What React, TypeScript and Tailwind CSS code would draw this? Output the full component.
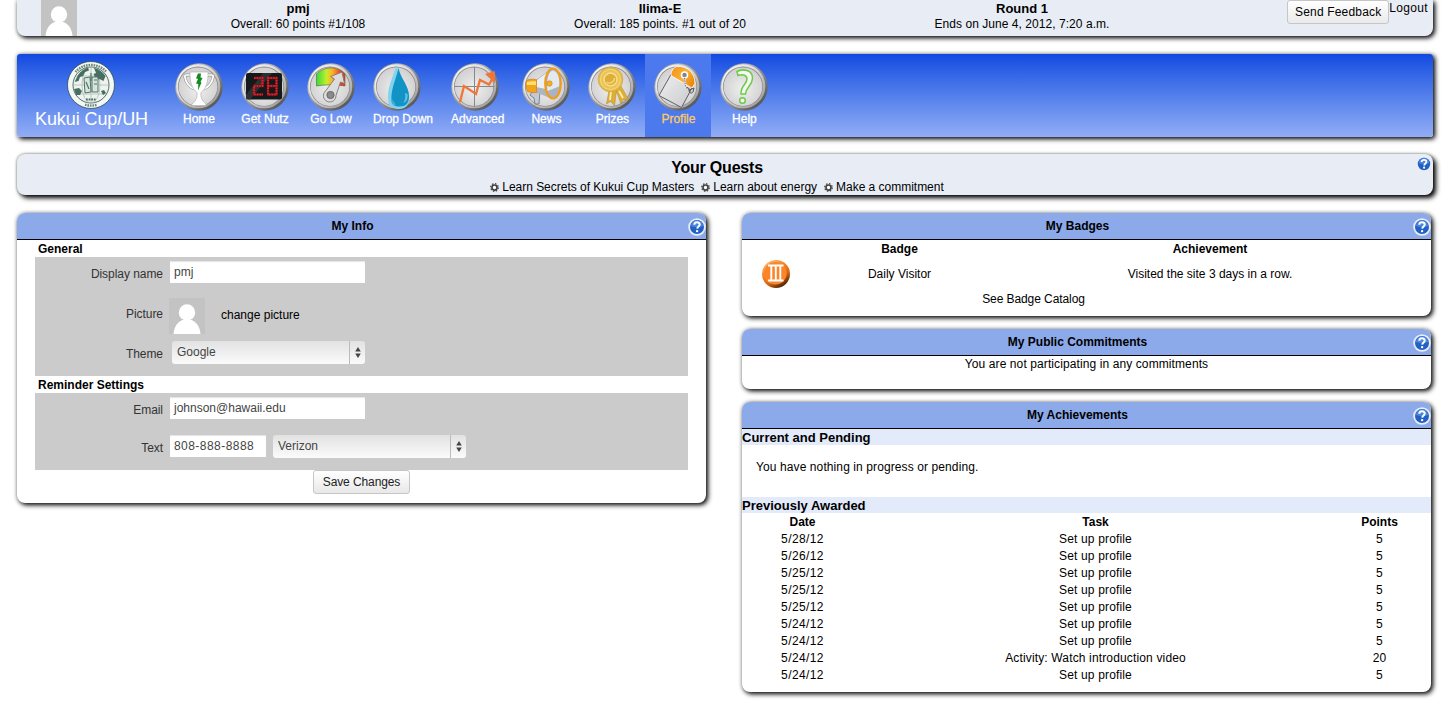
import React from "react";

const PANEL_SHADOW = "shadow-[2px_2px_5px_#000,0_0_4px_rgba(0,0,0,0.25)]";

function HelpIcon({ size }: { size: number }) {
  return (
    <svg width={size} height={size} viewBox="0 0 18 18" className="block shrink-0">
      <circle cx="9" cy="9" r="8.800" fill="#e9edf4" />
      <circle cx="9" cy="9" r="7" fill="#2360c4" />
      <path d="M3 8a6 6 0 0 1 12 0c-3 1.500-9 1.500-12 0z" fill="#4a85dc" />
      <path d="M6.300 6.700c.2-3.200 5.500-3.100 5.400-.2 0 2-2.300 1.900-2.500 4.200" fill="none" stroke="#fff" strokeWidth="2" />
      <circle cx="9.100" cy="13.100" r="1.200" fill="#fff" />
    </svg>
  );
}

function Avatar() {
  return (
    <svg width="36" height="36" viewBox="0 0 36 36" className="block shrink-0">
      <rect width="36" height="36" fill="#c3c3c3" />
      <circle cx="18" cy="14.500" r="8.200" fill="#fff" />
      <path d="M4.500 36c.5-8 5-12.500 9-14h9c4 1.500 8.500 6 9 14z" fill="#fff" />
    </svg>
  );
}

function Disc({ children }: { children: React.ReactNode }) {
  return (
    <svg width="48" height="48" viewBox="0 0 48 48" className="block">
      <defs>
        <linearGradient id="rim" x1="0" y1="0" x2="1" y2="1">
          <stop offset="0" stopColor="#8a8a8a" />
          <stop offset="0.3" stopColor="#b5b5b5" />
          <stop offset="0.55" stopColor="#8d8d8d" />
          <stop offset="1" stopColor="#3f3f3f" />
        </linearGradient>
        <linearGradient id="ring" x1="0" y1="0" x2="1" y2="1">
          <stop offset="0" stopColor="#ffffff" />
          <stop offset="0.5" stopColor="#d5d5d5" />
          <stop offset="1" stopColor="#8e8e8e" />
        </linearGradient>
        <radialGradient id="face" cx="0.5" cy="0.55" r="0.6">
          <stop offset="0" stopColor="#f0f0f0" />
          <stop offset="1" stopColor="#cfcdcf" />
        </radialGradient>
      </defs>
      <circle cx="24" cy="24" r="23.700" fill="url(#rim)" />
      <circle cx="23.300" cy="23.300" r="22" fill="url(#ring)" />
      <circle cx="23" cy="23.500" r="20" fill="#8b8b8b" />
      <circle cx="23" cy="23.700" r="19.300" fill="url(#face)" />
      {children}
    </svg>
  );
}

const trophy = (
  <g>
    <path d="M16 12h-4.500c-1.500 0-2 1-1.500 2.500 1 5 4 9 9 11.500M32 12h4.500c1.500 0 2 1 1.500 2.500-1 5-4 9-9 11.500" fill="none" stroke="#999" strokeWidth="3" />
    <path d="M16 12h-4.500c-1.500 0-2 1-1.500 2.500 1 5 4 9 9 11.500M32 12h4.500c1.500 0 2 1 1.500 2.500-1 5-4 9-9 11.500" fill="none" stroke="#fff" strokeWidth="1.700" />
    <path d="M15 9h18c.3 10-2 17-7 20.500-.5 4 .5 8 5 11.500v1.500H17V41c4.500-3.500 5.500-7.500 5-11.500C17 26 14.700 19 15 9z" fill="#fff" stroke="#aaa" strokeWidth=".6" />
    <path d="M23 10.500h3l-.5 4 2 .5-2 4 1 .5-3.500 8 .3-6.500-2.300-.5 2-4.500-2-.8z" fill="#168a20" />
  </g>
);

const digits = (
  <g>
    <rect x="5" y="10" width="36" height="26.500" rx="2" fill="#14191b" />
    <path d="M5 32L22 10h9L9 36.500H5z" fill="#3a4348" opacity=".6" />
    <path d="M13 15h8.500v8H13v8.500h9M27 15h8.500v16.500H27zM27 23h8.500" fill="none" stroke="#8a1419" strokeWidth="2.400" />
    <path d="M13 15h8.500v8H13v8.500h9M27 15h8.500v16.500H27zM27 23h8.500" fill="none" stroke="#f0262e" strokeWidth="1.700" strokeDasharray="1.400 1.200" />
  </g>
);

const gauge = (
  <g>
    <defs>
      <linearGradient id="heat">
        <stop offset="0" stopColor="#35dc3c" />
        <stop offset="0.35" stopColor="#c3ee2c" />
        <stop offset="0.55" stopColor="#ffb324" />
        <stop offset="0.85" stopColor="#f63a1b" />
      </linearGradient>
    </defs>
    <path d="M9.500 11c8-8 21-8 28.500 0v12c-8-1.500-21-1.500-28.500 0z" fill="url(#heat)" stroke="#4d6a30" strokeWidth=".6" />
    <path d="M18.500 28L27.500 16l-3.800-2.500L35 9l2.500 11.500-4-1.500-4.500 13.500a6.300 6.300 0 1 1-10.500-4.500z" fill="#dcdcdc" stroke="#777" strokeWidth=".9" />
    <circle cx="23.500" cy="32" r="3.600" fill="#8b8b8b" stroke="#666" />
  </g>
);

const drop = (
  <g>
    <path d="M23.500 1.500c-2 10-11 24-8 38 1 5 6 6.500 11 6.500 7 0 10-5 10-12C36.500 23 26 14 23.500 1.500z" fill="#82d4ee" />
    <path d="M25.500 5c-2 10-8 21-7 33 .3 4 3 5.500 8 5.500 6 0 9.500-3 9.500-10C36 23 27.500 15 25.500 5z" fill="#1193c6" />
    <path d="M32 30c1 4 0 8-2 10 3.500-1 5-4 4.500-9z" fill="#9ee0f2" opacity=".6" />
    <path d="M19.500 36l-.5 6 4 .5z" fill="#70cbe8" opacity=".5" />
  </g>
);

const chart = (
  <g>
    <path d="M23.500 4v40M3.500 23.500h40" stroke="#888" strokeWidth="1" />
    <path d="M9 39l4-16 12 8 4-14 9 4.500 3.500-6" fill="none" stroke="#ef7637" strokeWidth="2.300" />
    <path d="M34 11l10-3v12z" fill="#ef7637" />
  </g>
);

const megaphone = (
  <g>
    <path d="M11 28l7 0-1 13-4 0-1-6-4-3z" fill="#c3cad4" stroke="#657080" strokeWidth=".8" />
    <path d="M14 17.500L29 6v29l-15-6z" fill="#eceff3" stroke="#8b929b" strokeWidth=".5" />
    <path d="M14 24l15 3v8l-15-6z" fill="#aeb5bf" />
    <path d="M4.500 17.500c3-1.500 6-1.500 10-1v13c-4 .5-6 0-9-1-1.500-3-2-8-1-11z" fill="#f6a317" stroke="#cb7a10" strokeWidth=".6" />
    <path d="M5 19c3-1 6-1 9-.5V22H4.500z" fill="#ffe070" />
    <ellipse cx="31" cy="20.500" rx="7.800" ry="15" fill="#a9b4c3" stroke="#f19c1a" strokeWidth="2.200" />
    <path d="M31 7.500c5 1.500 7 8 6 16L25.500 28C24 17 26.500 8 31 7.500z" fill="#e3e9f0" />
    <circle cx="27.500" cy="20.500" r="2.700" fill="#f5ae28" stroke="#d17e12" strokeWidth=".6" />
  </g>
);

const ribbon = (
  <g>
    <path d="M21 27l-2.500 14 4-2.500 4 4 2-14zM28 27l5 14 2-4.500h5.500L33 23z" fill="#dcae3a" stroke="#b98823" strokeWidth=".5" />
    <path d="M23 28l-1 9M31 28l4 7" stroke="#fff0a6" strokeWidth="1.800" />
    <circle cx="22.500" cy="16.500" r="12.300" fill="#e6bb4c" stroke="#d3a640" strokeWidth=".8" />
    <circle cx="22.500" cy="16.500" r="10" fill="#e9c355" stroke="#f3d578" strokeWidth="1.200" />
    <circle cx="22.500" cy="16.500" r="6.500" fill="#dfae3a" stroke="#f7e08d" strokeWidth="1.400" />
    <path d="M18.500 19a5 5 0 0 0 8-4" stroke="#f4d677" strokeWidth="1.500" fill="none" />
  </g>
);

const tag = (
  <g>
    <defs>
      <linearGradient id="flap" x1="0" y1="0" x2="1" y2="0.6">
        <stop offset="0" stopColor="#f0930f" />
        <stop offset="0.6" stopColor="#fbb03a" />
        <stop offset="1" stopColor="#ee8a0a" />
      </linearGradient>
      <linearGradient id="paper" x1="0" y1="0" x2="1" y2="1">
        <stop offset="0" stopColor="#f0f0f1" />
        <stop offset="1" stopColor="#c9cacd" />
      </linearGradient>
    </defs>
    <path d="M17.500 10.500L5 32.500l22.500 12L38 25z" fill="url(#paper)" stroke="#5f5f63" strokeWidth="1" />
    <path d="M17 12.500c0-4 2-8 6-9 10-1 18 6 18 17l-3 4.500z" fill="url(#flap)" stroke="#fff" strokeWidth=".8" />
    <circle cx="30.500" cy="12" r="3" fill="#7c8794" stroke="#fff" strokeWidth="1.500" />
    <path d="M30.500 15l1 9c2 2 4 0 5 3" fill="none" stroke="#eee" strokeWidth="2" />
    <path d="M30.500 15l1 9c2 2 4 0 5 3" fill="none" stroke="#777" strokeWidth="1.200" strokeDasharray="1.400 1" />
    <path d="M35 27l5-2-1 4c-1.500 2-4 1-4-2zM33 24l3 4" fill="none" stroke="#555" strokeWidth="1" />
  </g>
);

const question = (
  <g fill="#f4f7f2" stroke="#69cc42" strokeWidth="1.500">
    <path d="M17 8.500C22 5.500 33 6.500 32.500 15.500 32 23 26 24 25.500 31h-4.500c-.5-9 6-9.500 6-15 0-4-4-5-9-3.500z" />
    <circle cx="22.500" cy="37.500" r="2.800" />
  </g>
);

const navItems = [
  { label: "Home", art: trophy },
  { label: "Get Nutz", art: digits },
  { label: "Go Low", art: gauge },
  { label: "Drop Down", art: drop },
  { label: "Advanced", art: chart },
  { label: "News", art: megaphone },
  { label: "Prizes", art: ribbon },
  { label: "Profile", art: tag, active: true },
  { label: "Help", art: question },
];

function Seal() {
  return (
    <svg width="48" height="48" viewBox="0 0 48 48" className="block">
      <circle cx="24" cy="24" r="23.500" fill="#f4f7f5" stroke="#2d5649" strokeWidth=".8" />
      <path d="M8.500 11A20.500 20.500 0 0 1 39.500 11" fill="none" stroke="#6d887d" strokeWidth="2.400" strokeDasharray="1.600 .9" />
      <path d="M18 43.700a20.500 20.500 0 0 0 12 0" fill="none" stroke="#6d887d" strokeWidth="2.400" strokeDasharray="1.600 .9" />
      <circle cx="24" cy="24" r="18" fill="#eef3f0" stroke="#3c6355" strokeWidth=".9" />
      <path d="M24 6v36M6 24h36M9 15h30M9 33h30" stroke="#a3b8af" strokeWidth=".7" />
      <ellipse cx="24" cy="24" rx="9" ry="18" fill="none" stroke="#a3b8af" strokeWidth=".7" />
      <path d="M11 14c3-4 6-6 10-7.500l1 3-4 1.500-2 4-3 1-1.500 4-4 1zM27 7c5 1 9 4 11.500 8l-2 5-4-2-3 1-3-6 2.500-1zM7 28l5-1 3 3-2 4-4 0zM34 30l3-1 2 3-3 2z" fill="#476f61" />
      <path d="M17 17l6-1 1 15-6 1zM25 16l6 0v15h-6z" fill="#d9e4de" stroke="#4e7566" strokeWidth="1" />
      <path d="M24 12v8M19 21l3 7M27 19h3M27 23h3" stroke="#4e7566" strokeWidth="1.200" />
      <path d="M19 38.500h10" stroke="#476f61" strokeWidth="2" strokeDasharray="1.800 .8" />
    </svg>
  );
}

function TopBar() {
  const cols = [
    ["pmj", "Overall: 60 points #1/108"],
    ["Ilima-E", "Overall: 185 points. #1 out of 20"],
    ["Round 1", "Ends on June 4, 2012, 7:20 a.m."],
  ];
  return (
    <header className={`flex h-9 rounded-b-lg bg-[#e8edf5] pl-6 pr-[5px] ${PANEL_SHADOW}`}>
      <Avatar />
      <div className="ml-10 grid w-[1086px] shrink-0 grid-cols-3 text-center">
        {cols.map(([title, line]) => (
          <div key={title} className="pt-px">
            <div className="text-[13px] font-bold leading-[15px]">{title}</div>
            <div className="leading-[17px] tracking-[0.05px]">{line}</div>
          </div>
        ))}
      </div>
      <div className="flex flex-1 items-start justify-end">
        <button className="h-6 w-[102px] shrink-0 whitespace-nowrap rounded-[3px] border border-[#c6c6c6] bg-linear-to-b from-white to-[#eaeaea] text-[12px] leading-[22px] tracking-[0.18px]">
          Send Feedback
        </button>
        <a className="leading-4 tracking-[0.35px]">Logout</a>
      </div>
    </header>
  );
}

function NavBar() {
  return (
    <nav className={`mt-[18px] flex h-[83px] rounded-[3px] bg-linear-to-b from-[#1249e0] to-[#92adf5] text-white ${PANEL_SHADOW}`}>
      <div className="flex w-[149px] flex-col items-center pt-[7px]">
        <div className="pr-[2px]">
          <Seal />
        </div>
        <div className="whitespace-nowrap text-[18px] leading-5 tracking-[-0.08px]">Kukui Cup/UH</div>
      </div>
      {navItems.map((item) => (
        <a
          key={item.label}
          className={item.active ? "min-w-[66px] bg-[#4c79ee] px-[9px] pt-[9px] text-[#fbcb62]" : "min-w-[66px] px-[9px] pt-[9px]"}
        >
          <Disc>{item.art}</Disc>
          <div className="whitespace-nowrap text-center leading-4 [-webkit-text-stroke:0.3px]">{item.label}</div>
        </a>
      ))}
    </nav>
  );
}

function Gear() {
  return (
    <svg width="9" height="9" viewBox="0 0 10 10" className="mr-[3px] shrink-0">
      <circle cx="5" cy="5" r="4.200" fill="none" stroke="#444" strokeWidth="1.400" strokeDasharray="1.650 1.650" />
      <circle cx="5" cy="5" r="2.800" fill="#fff" stroke="#444" strokeWidth="1.900" />
    </svg>
  );
}

function Quests() {
  return (
    <section className="mt-[17px] flex h-[41px] rounded-lg bg-[#e8edf5] pr-px shadow-[3px_3px_5px_#000,0_0_3px_rgba(0,0,0,0.5)]">
      <div className="flex-1 pl-px text-center">
        <h2 className="pt-1 text-[16px] font-bold leading-5 tracking-[-0.2px]">Your Quests</h2>
        <div className="flex justify-center gap-[7px] leading-[19px] tracking-[-0.02px]">
          {["Learn Secrets of Kukui Cup Masters", "Learn about energy", "Make a commitment"].map((q) => (
            <span key={q} className="flex items-center">
              <Gear />
              {q}
            </span>
          ))}
        </div>
      </div>
      <div className="pt-[2px]">
        <HelpIcon size={16} />
      </div>
    </section>
  );
}

function Panel({ title, className, children }: { title: string; className: string; children: React.ReactNode }) {
  return (
    <section className={`rounded-lg bg-white ${PANEL_SHADOW} ${className}`}>
      <div className="flex h-[27px] items-center rounded-t-lg border-b border-black bg-[#8ca9ea]">
        <h3 className="flex-1 text-center font-bold">{title}</h3>
        <div className="pt-[2px]">
          <HelpIcon size={18} />
        </div>
      </div>
      {children}
    </section>
  );
}

function Label({ children }: { children: React.ReactNode }) {
  return <label className="w-32 shrink-0 pt-[5px] text-right tracking-[-0.05px] text-[#333]">{children}</label>;
}

function Select({ value }: { value: string }) {
  return (
    <div className="flex h-[23px] w-[193px] rounded-[3px] bg-linear-to-b from-[#e2e2e2] to-[#fbfbfb] text-[#444]">
      <span className="flex-1 pl-[5px] leading-[22px]">{value}</span>
      <span className="flex w-4 items-center justify-center border-l border-[#bbb]">
        <svg width="6" height="11" viewBox="0 0 6 11">
          <path d="M3 0l2.800 4.500H.2zM3 11L.2 6.500h5.600z" fill="#444" />
        </svg>
      </span>
    </div>
  );
}

function TextBox({ value, className }: { value: string; className: string }) {
  return <div className={`ml-[7px] h-[22px] bg-white pl-1 leading-[22px] text-[#444] shadow-[inset_0_1px_1px_#e4e4e4] ${className}`}>{value}</div>;
}

function MyInfo() {
  return (
    <Panel title="My Info" className="h-[290px] w-[689px]">
      <div className="pl-[18px]">
        <h4 className="h-[17px] pl-[3px] font-bold leading-[18px]">General</h4>
        <div className="flex h-[119px] w-[653px] flex-col bg-[#cbcbcb] pt-1">
          <div className="flex h-[22px]">
            <Label>Display name</Label>
            <TextBox value="pmj" className="w-[195px]" />
          </div>
          <div className="mt-[15px] flex h-9">
            <div className="flex pt-[3px]">
              <Label>Picture</Label>
            </div>
            <div className="ml-1.5">
              <Avatar />
            </div>
            <a className="ml-4 pt-[9px]">change picture</a>
          </div>
          <div className="mt-[7px] flex h-[23px]">
            <Label>Theme</Label>
            <div className="ml-[9px]">
              <Select value="Google" />
            </div>
          </div>
        </div>
        <h4 className="h-[17px] pl-[3px] font-bold leading-[18px]">Reminder Settings</h4>
        <div className="flex h-[77px] w-[653px] flex-col bg-[#cbcbcb] pt-1">
          <div className="flex h-[22px]">
            <Label>Email</Label>
            <TextBox value="johnson@hawaii.edu" className="w-[195px]" />
          </div>
          <div className="mt-4 flex h-[23px]">
            <Label>Text</Label>
            <TextBox value="808-888-8888" className="w-[96px] tracking-[0.45px]" />
            <div className="ml-[7px]">
              <Select value="Verizon" />
            </div>
          </div>
        </div>
      </div>
      <button className="mx-auto block h-6 w-[97px] rounded-[3px] border border-[#c6c6c6] bg-linear-to-b from-white to-[#e8e8e8] leading-[22px] tracking-[-0.1px] text-[#222]">
        Save Changes
      </button>
    </Panel>
  );
}

function MyBadges() {
  return (
    <Panel title="My Badges" className="h-[103px]">
      <div className="grid grid-cols-[68px_179px_1fr] text-center leading-[18px]">
        <span />
        <span className="font-bold">Badge</span>
        <span className="font-bold">Achievement</span>
      </div>
      <div className="grid h-8 grid-cols-[68px_179px_1fr] items-center text-center">
        <svg width="28" height="28" viewBox="0 0 28 28" className="mx-auto block">
          <defs>
            <linearGradient id="orb" x1="0.2" y1="0" x2="0.8" y2="1">
              <stop offset="0" stopColor="#ffc18a" />
              <stop offset="0.3" stopColor="#f98a2c" />
              <stop offset="0.65" stopColor="#d9660f" />
              <stop offset="1" stopColor="#2a1402" />
            </linearGradient>
          </defs>
          <circle cx="14" cy="14" r="14" fill="url(#orb)" />
          <circle cx="13.300" cy="13.300" r="11.300" fill="#fb862a" />
          <path d="M6 5.500h15.500M6 20.500h15.500M9.300 6v14M13.800 6v14M18.300 6v14" stroke="#fff" strokeWidth="1.900" fill="none" />
        </svg>
        <span>Daily Visitor</span>
        <span>Visited the site 3 days in a row.</span>
      </div>
      <div className="pr-[106px] text-center leading-[18px] tracking-[-0.08px]">See Badge Catalog</div>
    </Panel>
  );
}

const awards: [string, string, number][] = [
  ["5/28/12", "Set up profile", 5],
  ["5/26/12", "Set up profile", 5],
  ["5/25/12", "Set up profile", 5],
  ["5/25/12", "Set up profile", 5],
  ["5/25/12", "Set up profile", 5],
  ["5/24/12", "Set up profile", 5],
  ["5/24/12", "Set up profile", 5],
  ["5/24/12", "Activity: Watch introduction video", 20],
  ["5/24/12", "Set up profile", 5],
];

function MyAchievements() {
  return (
    <Panel title="My Achievements" className="h-[290px]">
      <h4 className="h-4 bg-[#e3eafa] text-[13px] font-bold leading-[17px]">Current and Pending</h4>
      <p className="h-[52px] pl-3.5 leading-[44px] tracking-[0.1px]">You have nothing in progress or pending.</p>
      <h4 className="h-4 bg-[#e3eafa] text-[13px] font-bold leading-[17px]">Previously Awarded</h4>
      <div className="pt-px text-center leading-[17px]">
        <div className="grid grid-cols-[121px_465px_103px] font-bold">
          <span>Date</span>
          <span>Task</span>
          <span>Points</span>
        </div>
        {awards.map(([date, task, points], i) => (
          <div key={i} className="grid grid-cols-[121px_465px_103px] tracking-[0.15px]">
            <span className="tracking-[0.4px]">{date}</span>
            <span>{task}</span>
            <span>{points}</span>
          </div>
        ))}
      </div>
    </Panel>
  );
}

export default function App() {
  return (
    <div className="h-[707px] w-[1451px] overflow-hidden bg-white pl-[17px] pr-[18px] font-['Liberation_Sans',Arial,sans-serif] text-[12px] leading-4 text-black">
      <TopBar />
      <NavBar />
      <Quests />
      <main className="mt-[18px] flex items-start gap-9">
        <MyInfo />
        <div className="flex w-[689px] flex-col gap-[13px]">
          <MyBadges />
          <Panel title="My Public Commitments" className="h-[60px]">
            <p className="text-center leading-4 tracking-[0.1px]">You are not participating in any commitments</p>
          </Panel>
          <MyAchievements />
        </div>
      </main>
    </div>
  );
}
